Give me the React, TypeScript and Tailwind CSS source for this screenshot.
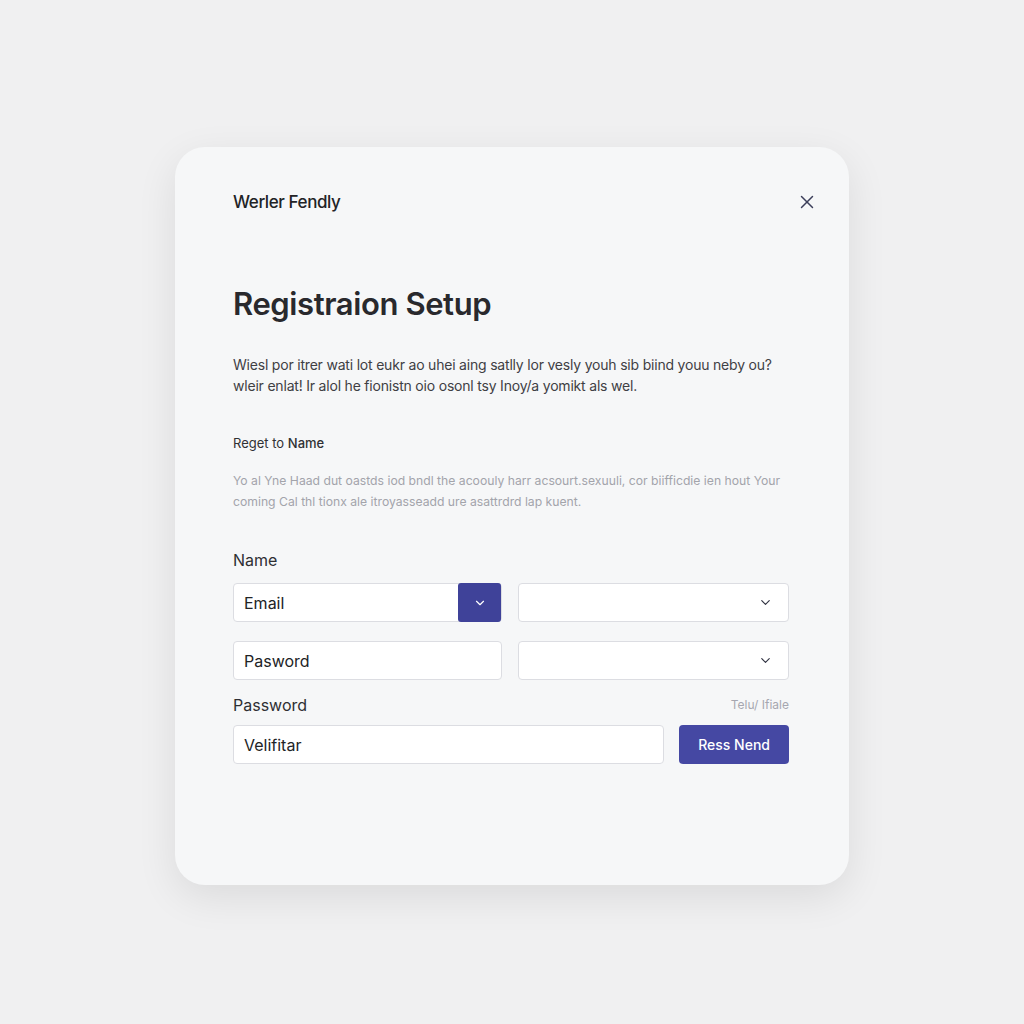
import { ChevronDown, X } from 'lucide-react';

const font = { fontFamily: 'Inter, "Noto Sans", sans-serif' };

function SelectBox() {
  return (
    <div className="flex h-[39px] w-[271px] items-center justify-end rounded-[4px] border border-[#dcdde2] bg-white pr-[15px]">
      <ChevronDown className="h-[15px] w-[15px] text-[#2f3140]" strokeWidth={1.8} />
    </div>
  );
}

export default function App() {
  return (
    <div
      className="flex min-h-[1024px] w-full items-start justify-center bg-[#f0f0f1] pt-[147px]"
      style={font}
    >
      <div className="flex h-[738px] w-[674px] flex-col rounded-[30px] bg-[#f6f7f8] shadow-[0_12px_40px_rgba(0,0,0,0.09)]">
        <div className="flex items-center justify-between pl-[58px] pr-[31px] pt-[43px]">
          <span className="text-[17px] leading-[24px] font-medium tracking-[-0.4px] text-[#222326]">
            Werler Fendly
          </span>
          <X className="h-[22px] w-[22px] text-[#3c3f5a]" strokeWidth={1.6} />
        </div>

        <div className="flex flex-col pl-[58px] pr-[60px]">
          <h1 className="mt-[72px] text-[31px] leading-[36px] font-semibold tracking-[-0.4px] text-[#29292d]">
            Registraion Setup
          </h1>

          <p className="mt-[32px] whitespace-nowrap text-[14px] leading-[21px] tracking-[-0.2px] text-[#3f4044]">
            Wiesl por itrer wati lot eukr ao uhei aing satlly lor vesly youh sib biind youu neby ou?
            <br />
            wleir enlat! Ir alol he fionistn oio osonl tsy Inoy/a yomikt als wel.
          </p>

          <p className="mt-[38px] text-[13px] leading-[18px] text-[#303134]">
            Reget to <span className="font-medium">Name</span>
          </p>

          <p className="mt-[18px] whitespace-nowrap text-[12.2px] leading-[21px] text-[#a3a4ab]">
            Yo al Yne Haad dut oastds iod bndl the acoouly harr acsourt.sexuuli, cor biifficdie ien hout Your
            <br />
            coming Cal thl tionx ale itroyasseadd ure asattrdrd lap kuent.
          </p>

          <label className="mt-[37px] text-[16px] leading-[22px] text-[#2e2f33]">Name</label>

          <div className="mt-[12px] flex gap-[16px]">
            <div className="flex h-[39px] w-[269px] items-center rounded-[4px] border border-[#dcdde2] bg-white">
              <span className="flex-1 pl-[10px] text-[16px] text-[#222326]">Email</span>
              <div className="flex h-[39px] w-[43px] items-center justify-center rounded-[3px] bg-[#3f4299]">
                <ChevronDown className="h-[14px] w-[14px] text-white" strokeWidth={2} />
              </div>
            </div>
            <SelectBox />
          </div>

          <div className="mt-[19px] flex gap-[16px]">
            <div className="flex h-[39px] w-[269px] items-center rounded-[4px] border border-[#dcdde2] bg-white pl-[10px]">
              <span className="text-[16px] text-[#222326]">Pasword</span>
            </div>
            <SelectBox />
          </div>

          <div className="mt-[14px] flex items-center justify-between">
            <label className="text-[16px] leading-[22px] text-[#2e2f33]">Password</label>
            <span className="text-[12px] text-[#a6a7b0]">Telu/ Ifiale</span>
          </div>

          <div className="mt-[9px] flex gap-[15px]">
            <div className="flex h-[39px] w-[432px] items-center rounded-[4px] border border-[#dcdde2] bg-white pl-[10px]">
              <span className="text-[16px] text-[#222326]">Velifitar</span>
            </div>
            <button className="h-[39px] w-[110px] rounded-[4px] bg-[#4548a3] text-[14px] font-medium text-white">
              Ress Nend
            </button>
          </div>
        </div>
      </div>
    </div>
  );
}
